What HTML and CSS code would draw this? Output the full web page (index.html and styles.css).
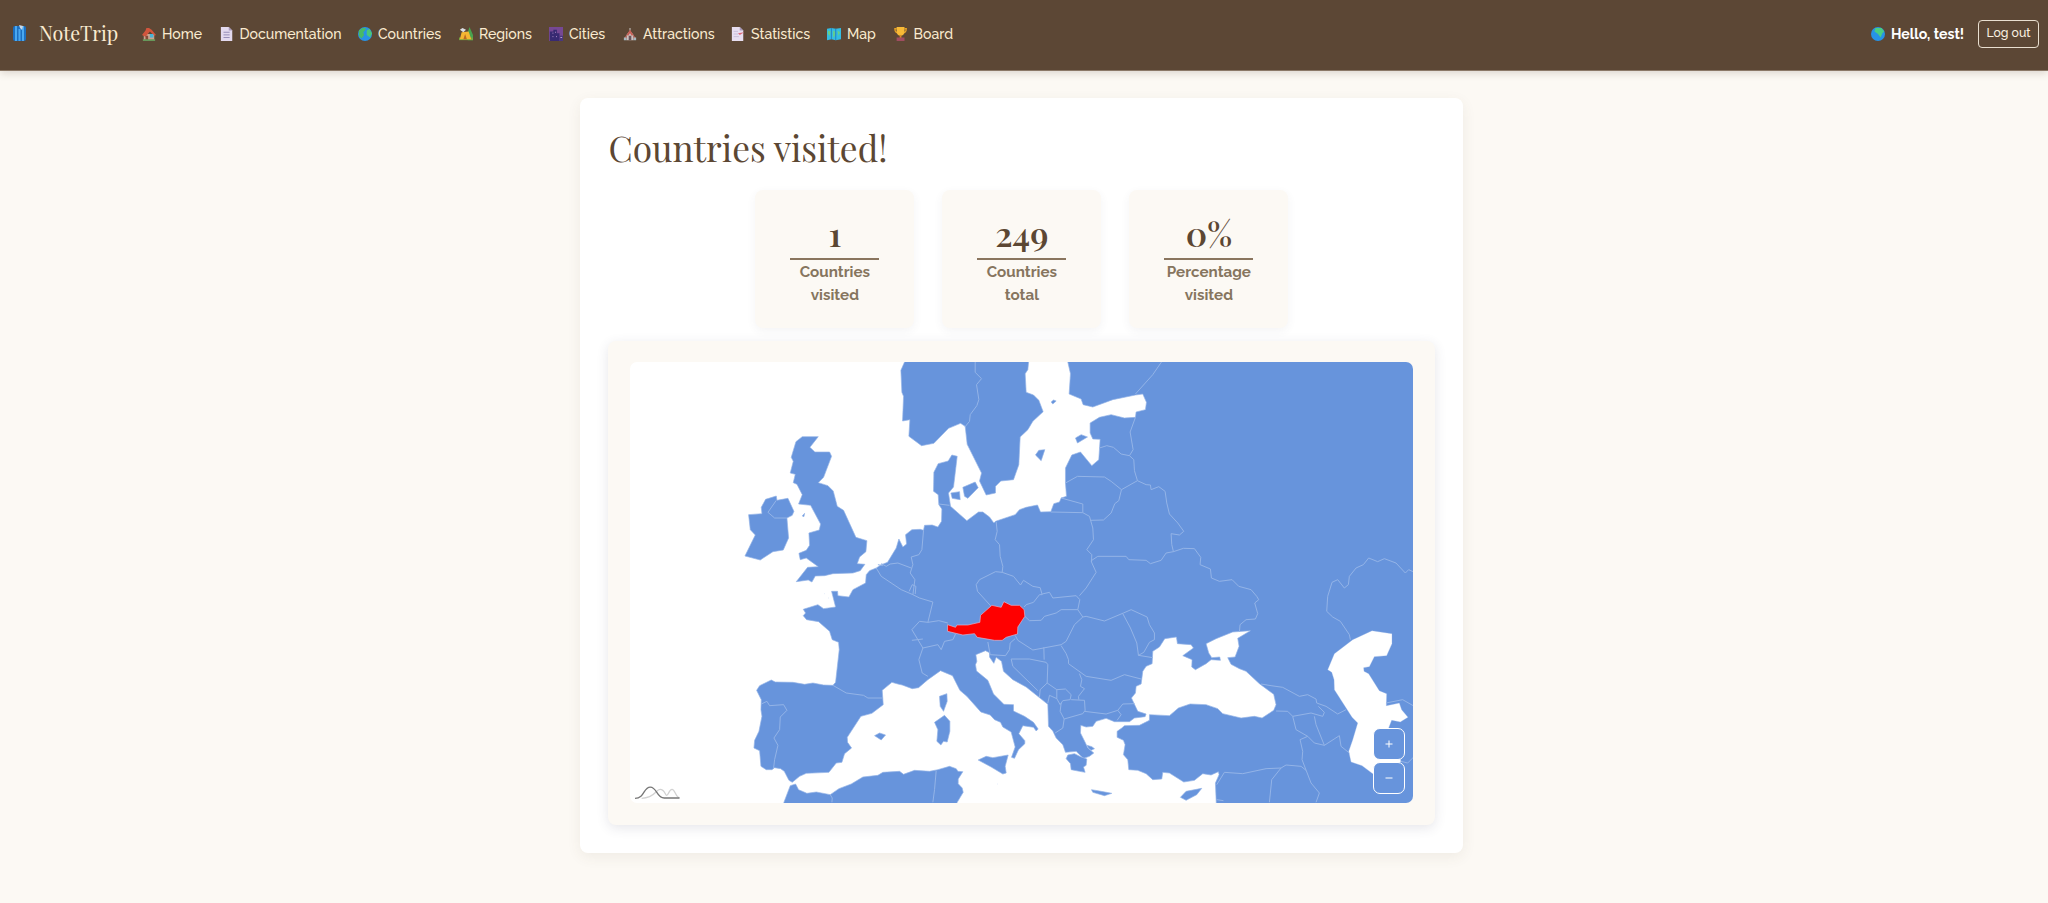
FILE: index.html
```html
<!DOCTYPE html>
<html lang="en">
<head>
<meta charset="utf-8">
<title>NoteTrip</title>
<link rel="stylesheet" href="styles.css">
</head>
<body>
<header class="navbar">
  <a class="brand"><svg class="brand-icon" viewBox="0 0 16 18"><rect x="1" y="2" width="13" height="15" rx="2" fill="#1c6fc0"/><path d="M3 2h2v15H3zM6.500 5h2v12h-2zM10 2h2v15h-2z" fill="#4aa8ef"/><path d="M7 1l4 1-1 4-2-2z" fill="#c8d8e8"/></svg><span>NoteTrip</span></a>
  <nav class="links">
    <a class="link"><svg class="ico" viewBox="0 0 16 16"><path d="M2 8h12v7H2z" fill="#c9a48f"/><path d="M0 9l4-5 1-3h3l3 2 5 6-2 1-5-5-5 6z" fill="#d2553d"/><path d="M4 10h3v5H4z" fill="#884b38"/><path d="M9 8h4v4H9z" fill="#49b4d8"/><path d="M1 14h14v2H1z" fill="#67975a"/></svg><span>Home</span></a>
    <a class="link"><svg class="ico" viewBox="0 0 16 16"><path d="M1 0h9l4 4v12H1z" fill="#e3d9ee"/><path d="M10 0v4h4z" fill="#a79abb"/><path d="M4 6h7M4 9h7M4 12h7" stroke="#8d83b0"/></svg><span>Documentation</span></a>
    <a class="link"><svg class="ico" viewBox="0 0 16 16"><circle cx="8" cy="8" r="8" fill="#2793e6"/><path d="M1 4l4-3 4 0-1 3-2 2 1 3-3 4-3-3z" fill="#49ba65"/><path d="M10 4l3-2 3 5-2 5-4-3z" fill="#4bc77a"/></svg><span>Countries</span></a>
    <a class="link"><svg class="ico" viewBox="0 0 16 16"><path d="M12 0l4 9v6h-6V6z" fill="#49a34e"/><path d="M0 12h16v3H0z" fill="#77a440"/><path d="M3 6l8-1 3 9H1z" fill="#f5b632"/><path d="M7 8l2 6H5z" fill="#b96a22"/><path d="M1 3l3-2 4 2-3 3z" fill="#d9dde1"/></svg><span>Regions</span></a>
    <a class="link"><svg class="ico" viewBox="0 0 16 16"><path d="M0 0h16v16H0z" fill="#764894"/><path d="M1 5h4V3h4v4h3v9H1z" fill="#382a72"/><path d="M12 10h4v6h-4z" fill="#49377e"/><path d="M4 7h1M7 6h1M4 11h1M8 11h1M13 12h2" stroke="#c9a4d8"/></svg><span>Cities</span></a>
    <a class="link"><svg class="ico" viewBox="0 0 16 16"><path d="M7.500 1h1v3h-1z" fill="#ddd"/><path d="M4 9l4-5 4 5v6H4z" fill="#cfc0bd"/><path d="M4 9l4-6 4 6-2 1-2-3-2 3zM1 13l3-4v4zM15 13l-3-4v4z" fill="#c85f55"/><path d="M1 12h3v3H1zM12 12h3v3h-3z" fill="#a5b7be"/><path d="M6.500 10h3v5h-3z" fill="#66545b"/></svg><span>Attractions</span></a>
    <a class="link"><svg class="ico" viewBox="0 0 16 16"><path d="M1 0h9l4 4v12H1z" fill="#e7def0"/><path d="M10 0v4h4z" fill="#a79abb"/><path d="M3 5h5M3 8h5M3 11h6" stroke="#c5bad6"/><path d="M8 7l7-1-5 3z" fill="#dd6777"/></svg><span>Statistics</span></a>
    <a class="link"><svg class="ico" viewBox="0 0 16 16"><path d="M0 2l5-1 5 1 6-1v13l-6 1-5-1-5 1z" fill="#33bde2"/><path d="M5 1v13M10 2v13" stroke="#2578bd"/><path d="M1 4l3 1-1 5-2-2zM7 4l2 1 0 5-2 2zM12 4l3 2-2 4z" fill="#68cf84"/></svg><span>Map</span></a>
    <a class="link"><svg class="ico" viewBox="0 0 16 16"><path d="M3 2H1c0 4 2 5 5 5M12 2h2c0 4-2 5-5 5" fill="none" stroke="#e6a126" stroke-width="1.500"/><path d="M3 0h9v5c0 3-2 5-4.500 5S3 8 3 5z" fill="#f8b936"/><path d="M6.500 9h2v4h-2z" fill="#db8b25"/><path d="M3 12h9v4H3z" fill="#a04d60"/></svg><span>Board</span></a>
  </nav>
  <div class="user">
    <svg class="ico" viewBox="0 0 16 16"><circle cx="8" cy="8" r="8" fill="#2793e6"/><path d="M5 1h7l3 4-2 2-2 5-3-4-4-3z" fill="#49ce83"/></svg>
    <span class="hello">Hello, test!</span>
    <button class="logout">Log out</button>
  </div>
</header>
<main class="card">
  <h1 class="title">Countries visited!</h1>
  <section class="stats">
    <div class="stat"><div class="num">1</div><div class="label">Countries<br>visited</div></div>
    <div class="stat"><div class="num">249</div><div class="label">Countries<br>total</div></div>
    <div class="stat"><div class="num">0%</div><div class="label">Percentage<br>visited</div></div>
  </section>
  <section class="panel">
    <div class="map">
      <svg class="map-svg" viewBox="31 37 2350 1323" preserveAspectRatio="none">
        <g class="land">
          <path d="M855 30L855 37 844 62 847 128 852 140 849 214 871 210 868 260 906 288 943 281 987 236 1023 221 1037 230 1043 284 1086 370 1080 394 1100 436 1128 430 1128 410 1144 394 1182 390 1198 345 1202 262 1225 240 1240 215 1271 186 1258 152 1242 136 1220 128 1217 72 1225 60 1228 30z"/>
          <path d="M1345 30L1345 37 1353 72 1349 133 1385 148 1391 165 1420 172 1480 150 1548 136 1570 133 1581 158 1578 180 1550 187 1548 203 1515 205 1475 195 1440 203 1412 220 1412 250 1420 268 1442 269 1438 330 1417 348 1383 307 1357 316 1338 355 1338 400 1341 440 1325 445 1320 457 1303 462 1294 486 1263 487 1254 466 1220 473 1200 480 1187 495 1128 515 1123 520 1110 502 1090 487 1077 487 1042 513 993 470 987 430 1002 412 1007 370 1013 320 997 316 986 334 956 342 943 368 942 425 956 435 958 465 967 478 966 515 955 532 938 526 915 527 912 542 902 539 877 540 858 555 861 583 850 592 838 568 830 595 804 638 785 645 770 655 750 663 740 675 738 700 700 720 688 742 655 738 654 725 636 725 648 772 612 777 595 765 551 779 558 790 551 798 561 810 597 816 630 845 638 870 657 878 659 900 648 998 640 1007 612 1006 580 1000 555 1004 520 998 467 997 455 991 420 1008 411 1022 425 1050 424 1080 427 1100 418 1145 405 1172 403 1195 420 1203 424 1250 440 1260 457 1260 465 1254 483 1257 494 1265 508 1292 518 1298 540 1280 560 1271 628 1268 650 1240 667 1238 675 1212 696 1195 684 1178 683 1163 724 1100 757 1091 791 1065 788 1022 817 998 835 1003 848 1006 878 1017 897 1014 925 990 963 963 999 978 1021 1022 1042 1040 1084 1087 1112 1096 1125 1110 1143 1118 1150 1132 1175 1147 1187 1192 1176 1223 1185 1226 1197 1200 1216 1182 1216 1173 1198 1152 1210 1128 1242 1133 1250 1144 1256 1138 1242 1118 1215 1100 1182 1084 1182 1065 1153 1064 1122 1033 1105 992 1071 964 1068 945 1072 935 1069 915 1098 903 1110 909 1110 922 1123 941 1130 923 1146 935 1152 965 1180 990 1220 1012 1285 1064 1287 1130 1300 1144 1310 1165 1330 1185 1338 1208 1370 1205 1385 1220 1393 1226 1410 1220 1423 1210 1405 1195 1398 1180 1383 1150 1384 1127 1400 1132 1420 1130 1430 1115 1460 1106 1485 1116 1530 1116 1545 1105 1577 1101 1580 1093 1555 1085 1536 1045 1548 1030 1550 1010 1565 1003 1570 965 1580 950 1598 942 1600 905 1620 892 1636 867 1671 862 1674 882 1715 885 1722 895 1690 918 1718 930 1717 952 1728 960 1760 942 1775 930 1803 932 1801 922 1777 924 1768 910 1760 882 1790 867 1840 847 1893 843 1855 866 1859 890 1847 922 1825 924 1835 944 1860 957 1880 965 1920 1002 1963 1034 1970 1065 1963 1082 1928 1105 1905 1100 1865 1105 1810 1092 1795 1077 1760 1065 1712 1063 1677 1075 1650 1098 1590 1095 1590 1112 1560 1127 1515 1128 1507 1135 1493 1145 1493 1163 1512 1172 1517 1185 1512 1215 1525 1230 1528 1260 1555 1262 1580 1272 1600 1290 1627 1288 1630 1268 1650 1270 1693 1297 1725 1292 1750 1272 1775 1276 1797 1266 1799 1275 1788 1300 1791 1370 2390 1370 2390 30z"/>
          <path d="M490 1368L493 1358 512 1308 528 1303 537 1320 562 1331 590 1327 632 1335 658 1317 695 1303 730 1282 775 1277 790 1268 840 1265 852 1274 885 1262 930 1265 955 1260 990 1250 1010 1257 1015 1265 1030 1266 1016 1288 1016 1302 1028 1315 1031 1328 1013 1358 1010 1368z"/>
          <path d="M548 261L596 261 571 293 586 307 630 307 636 320 612 383 596 399 625 408 641 424 653 470 672 482 709 563 742 573 739 606 720 622 713 642 736 644 722 663 700 670 640 672 615 678 587 679 577 697 566 691 530 696 564 653 596 651 560 625 542 630 538 611 560 602 570 587 568 550 599 541 603 523 573 467 537 463 548 435 532 404 521 399 527 374 512 370 521 335 515 323 529 276z"/>
          <path d="M387 495L427 492 425 473 438 449 470 439 472 452 505 446 523 485 518 497 502 505 507 565 491 601 460 606 422 631 376 619 407 556 392 540z"/>
          <path d="M548 499l7-8-2 10zM994 430l26-4 2 24-24-4zM1030 413l37-16 9 17-31 32-10-6zM1248 316l10-14 18-2-11 33zM1368 265l17-10 19 7-30 18zM1295 157l7-6 8 3-10 9z"/>
          <path d="M1345 1216l20-4 20 10 17 6-2 19-8 5 5 16-17-3-25-5-2-18-13-15zM1416 1320l24 4 37 7-22 7-35-10zM1076 1231l24-11 20 4 46-8-9 34 3 20-10 3-35-21z"/>
          <path d="M960 1040l22-8 1 23-11 30-10-15zM945 1118l30-21 16 18v30l-8 32-11-2-8 11-12-11 3-35zM765 1158l15-8 18 6-13 15zM1683 1343l17-18 47-9-15 19-32 17zM1403 1187l14 4 8 6-10 5-8-6z"/>
          <path d="M1134 1303h1M614 732h1M626 745h1M1073 983h1"/>
        </g>
        <path class="sea" d="M2200 870L2258 843 2318 852 2318 882 2302 918 2265 921 2250 951 2233 954 2234 965 2248 972 2280 1023 2302 1032 2301 1068 2340 1060 2347 1080 2366 1103 2343 1117 2317 1112 2308 1135 2340 1220 2345 1235 2320 1260 2260 1272 2228 1248 2195 1237 2188 1205 2200 1170 2215 1120 2198 1103 2145 1020 2144 990 2137 968 2125 960 2145 912z"/>
        <g class="borders">
          <path d="M1067 37L1067 68 1086 87 1071 105 1078 150 1072 168 1052 195 1050 215 1036 232M1626 37L1600 75 1548 133"/>
          <path d="M470 452L445 488 465 505 502 505M958 463L990 467M1548 203L1532 247 1541 300 1530 318M1440 295L1462 288 1482 293 1505 313 1530 318 1543 330 1545 363 1554 393 1580 405 1593 406 1595 420 1618 411 1637 425 1642 460 1650 493 1675 520 1693 545 1680 556 1655 552 1657 585 1662 606M1338 400L1374 380 1455 382 1475 395 1506 420 1554 393M1506 420L1498 453 1486 462 1475 490 1452 511 1413 512M1325 445L1390 463 1390 488M1294 487L1390 489 1410 500 1420 535 1422 570 1402 600 1417 615 1416 637 1430 668 1400 715 1380 738"/>
          <path d="M1414 634L1435 620 1520 620 1528 630 1580 632 1593 642 1625 632 1640 610 1662 606 1692 596 1725 597 1744 623 1742 645 1773 658 1776 685 1800 695 1838 690 1858 710 1895 720 1912 740 1918 750 1906 760 1915 792 1908 808 1880 810 1862 825 1860 847"/>
          <path d="M1130 517L1133 545 1127 570 1140 585 1142 620 1150 650 1148 668M1148 668L1128 666 1080 690 1070 705 1074 725 1113 768M1148 668L1182 680 1203 706 1212 692 1240 710 1262 714 1268 735 1260 735 1242 758 1220 765 1214 772M1268 733L1290 728 1300 745 1370 738 1381 750 1375 780M1216 800L1230 813 1265 812 1275 800 1310 790 1325 780 1375 780 1390 802 1365 825 1340 875 1325 885 1240 901 1195 872 1187 857M1390 802L1400 800 1455 814 1512 790 1535 780 1583 802 1590 825 1605 850 1605 870 1590 878 1573 908 1557 917 1552 880 1533 835 1510 792M1557 917L1600 924M1325 888L1340 912 1347 930 1347 942 1400 980 1475 992 1515 975 1565 988M1273 893L1274 930M1175 928L1230 928 1280 938 1285 945 1283 1000M1175 928L1180 950 1255 1023M1105 877L1112 915M1112 915L1158 918 1170 900 1172 880 1187 867M1283 1000L1262 1020 1260 1042M1283 1000L1312 1020 1338 1018 1355 1035 1352 1050 1330 1053 1322 1065 1312 1047 1290 1037 1285 1060M1312 1020L1312 1047M1355 1050L1395 1052 1397 1082 1390 1092 1334 1108 1322 1085 1325 1060M1334 1108L1330 1135 1307 1150M1380 972L1387 990 1383 1010 1395 1017 1377 1040 1378 1050M1395 1085L1460 1093 1495 1082 1510 1063 1545 1062M1495 1082L1505 1095 1493 1112"/>
          <path d="M912 542L907 600 898 615 875 622 880 645 872 670 886 690 880 735 900 745 940 757 925 818 900 815 877 840 910 895M910 895L898 930 908 970 925 980M785 642L800 650 812 643 835 640 875 655M770 655L785 680 845 720 880 735M775 645L790 648M869 725L878 705 889 710 887 733M925 818L958 813 985 820M877 872L910 868M910 895L955 885 965 900 975 875 1000 870 1008 853M640 1007L680 1030 732 1037 745 1045 788 1045M425 1063L442 1055 450 1068 492 1065 502 1082 482 1102 480 1140 463 1165 475 1187 465 1230 462 1255M632 1335L638 1345 637 1358M950 1263L945 1320 940 1358"/>
          <path d="M2193 870L2190 855 2163 815 2140 802 2122 785 2125 740 2138 698 2155 690 2175 715 2187 705 2190 680 2210 655 2232 645 2248 625 2275 636 2295 627 2330 640 2358 670 2368 660 2390 670M1925 1003L1955 1008 1990 1013 2040 1040 2065 1035 2090 1048 2092 1060 2120 1070 2155 1093 2180 1080M1970 1084L2005 1085 2020 1100 2075 1090 2110 1100 2115 1088 2097 1070M2020 1100L2030 1140 2065 1160 2085 1180 2115 1187 2160 1158 2165 1190 2190 1210M2085 1100L2090 1125 2115 1187M2065 1160L2042 1170 2050 1205 2048 1230 2075 1300 2100 1330 2090 1358M1792 1305L1815 1268 1870 1272 1940 1257 1985 1255 2000 1246 2045 1250 2060 1262M1985 1255L1957 1290 1950 1358M1792 1350L1812 1353M2300 1060L2350 1050 2385 1070M2345 1235L2365 1240 2385 1220"/>
        </g>
        <path class="visited" d="M984 825L1008 833 1012 826 1045 826 1081 818 1083 797 1117 767 1145 773 1153 756 1175 767 1200 767 1214 780 1216 800 1195 832 1194 853 1160 863 1148 872 1125 872 1073 863 1065 852 1030 856 984 845z"/>
      </svg>
      <svg class="amlogo" viewBox="0 0 136 42"><path d="M20 37C62 36 62 10 76 10S91 28 96 28s7-18 16-18 11 26 24 26" fill="none" stroke="#d2d2d2" stroke-width="4"/><path d="M0 37C30 37 25 3 46 3S65 36 88 36h46" fill="none" stroke="#777" stroke-width="4"/></svg>
      <div class="zoom">
        <button class="zb"><svg viewBox="0 0 10 10"><path d="M1.500 5h7M5 1.500v7"/></svg></button>
        <button class="zb"><svg viewBox="0 0 10 10"><path d="M1.500 5h7"/></svg></button>
      </div>
    </div>
  </section>
</main>
</body>
</html>
```

FILE: styles.css
```css
* { box-sizing: border-box; }
body { margin: 0; height: 903px; overflow: hidden; background: #fcf9f4; font-family: Raleway, Lato, sans-serif; color: #5c4733; }
.navbar { height: 71px; background: #5c4735; border-bottom: 1px solid #8b7867; box-shadow: 0 2px 8px rgba(92,71,51,.2); display: flex; align-items: flex-start; color: #faebd0; }
.brand { display: flex; align-items: center; width: 142px; height: 66px; padding-left: 12px; font: 19.700px "Playfair Display", "Liberation Serif", serif; white-space: nowrap; }
.brand-icon { width: 16px; height: 18px; margin-right: 11px; }
.links { display: grid; grid-template-columns: 77.5px 138.500px 101px 90px 74px 108px 96px 66.500px 80px; height: 67px; align-items: center; font-size: 14.080px; font-weight: 500; }
.link { display: flex; align-items: center; white-space: nowrap; }
.ico { width: 14px; height: 14px; margin-right: 6px; flex: none; }
.user { margin-left: auto; height: 67px; display: flex; align-items: center; padding-right: 9px; }
.hello { color: #fff; font-size: 14.080px; font-weight: 700; width: 87px; white-space: nowrap; }
.logout { width: 61px; height: 28px; padding: 0 0 2px; border: 1px solid #e9dfd0; border-radius: 4px; background: none; color: #faf0e0; font: 500 12.250px Raleway, Lato, sans-serif; white-space: nowrap; }
.card { width: 883px; height: 755px; margin: 27px 0 0 580.400px; padding: 28px; background: #fff; border-radius: 8px; box-shadow: 0 4px 14px rgba(92,71,51,.08); }
.title { margin: 0; height: 64px; font: 400 35.300px/44px "Playfair Display", "Liberation Serif", serif; white-space: nowrap; }
.stats { display: flex; justify-content: center; gap: 28px; height: 138px; }
.stat { width: 159px; height: 138px; padding: 24px 35px; background: #fcf9f4; border-radius: 8px; box-shadow: 0 3px 10px rgba(60,60,90,.06); text-align: center; }
.num { height: 46px; border-bottom: 2px solid #8a755e; font: 600 34px/39px "Playfair Display", "Liberation Serif", serif; white-space: nowrap; }
.label { margin: 1px -10px 0; font-size: 15.200px; line-height: 23px; font-weight: 700; color: #86755e; }
.panel { margin-top: 13px; width: 827px; height: 484px; padding: 21px 22px; background: #fcf9f4; border-radius: 8px; box-shadow: 0 3px 12px rgba(60,60,90,.13); }
.map { position: relative; width: 783px; height: 441px; background: #fff; border-radius: 7px; overflow: hidden; }
.map-svg { display: block; width: 783px; height: 441px; }
.land { fill: #6794dc; stroke: #94b4e7; stroke-width: 2; }
.sea { fill: #fff; stroke: #94b4e7; stroke-width: 1; }
.borders { fill: none; stroke: #94b4e7; stroke-width: 3; stroke-linejoin: round; }
.visited { fill: #f00; stroke: #d9b8d5; stroke-width: 2; }
.amlogo { position: absolute; left: 5px; bottom: 3px; width: 45px; height: 14px; }
.zoom { position: absolute; right: 8px; bottom: 9px; display: flex; flex-direction: column; gap: 2px; }
.zb { width: 32px; height: 32px; padding: 0; display: grid; place-items: center; border: 1px solid #fff; border-radius: 7px; background: #6794dc; }
.zb svg { width: 10px; height: 10px; stroke: #fff; stroke-width: 1; }
```
